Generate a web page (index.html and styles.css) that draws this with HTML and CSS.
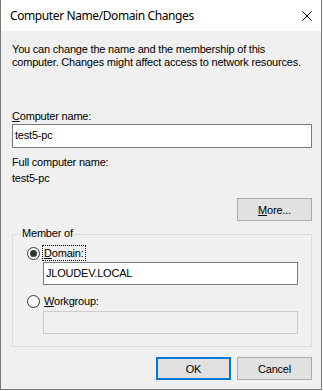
FILE: index.html
```html
<!DOCTYPE html>
<html lang="en">
<head>
    <meta charset="UTF-8">
    <title>Computer Name/Domain Changes</title>
    <link rel="stylesheet" href="styles.css">
</head>
<body>
    <div class="window">
        <div class="titlebar">
            <span class="title">Computer Name/Domain Changes</span>
            <svg class="close" width="10" height="10" viewBox="0 0 10 10">
                <path d="M0.5 0.5 L9.5 9.5 M9.5 0.5 L0.5 9.5" stroke="#000" stroke-width="1" fill="none"/>
            </svg>
        </div>
        <div class="content">
            <p class="intro">You can change the name and the membership of this computer. Changes might affect access to network resources.</p>

            <div class="label label-name"><u>C</u>omputer name:</div>
            <div class="textbox">test5-pc</div>

            <div class="label label-full">Full computer name:</div>
            <div class="label label-value">test5-pc</div>

            <div class="more-row">
                <button class="btn"><u>M</u>ore...</button>
            </div>

            <div class="group">
                <span class="group-title">Member of</span>
                <div class="radio-row">
                    <span class="radio checked"></span>
                    <span class="radio-label focused"><u>D</u>omain:</span>
                </div>
                <div class="textbox indent">JLOUDEV.LOCAL</div>
                <div class="radio-row second">
                    <span class="radio"></span>
                    <span class="radio-label"><u>W</u>orkgroup:</span>
                </div>
                <div class="textbox indent disabled"></div>
            </div>

            <div class="buttons">
                <button class="btn default">OK</button>
                <button class="btn">Cancel</button>
            </div>
        </div>
    </div>
</body>
</html>
```

FILE: styles.css
```css
* {
    margin: 0;
    padding: 0;
    box-sizing: border-box;
}

body {
    background: #ffffff;
    font-family: "Liberation Sans", Arial, sans-serif;
    font-size: 11px;
    line-height: 13px;
    color: #000;
}

.window {
    width: 322px;
    height: 390px;
    background: #f0f0f0;
    border: 1px solid #777777;
    border-top: none;
    display: flex;
    flex-direction: column;
}

.titlebar {
    height: 31px;
    background: #ffffff;
    display: flex;
    align-items: center;
    justify-content: space-between;
    padding: 0 9px 0 9px;
}

.title {
    font-family: "Noto Sans", sans-serif;
    font-size: 12px;
    line-height: 16px;
    letter-spacing: -0.4px;
}

.close {
    display: block;
}

.content {
    padding: 0 9px 0 11px;
    letter-spacing: -0.2px;
}

.intro {
    margin-top: 12px;
}

.label-name {
    margin-top: 41px;
}

.textbox {
    margin-top: 1px;
    height: 24px;
    background: #ffffff;
    border: 1px solid #7a7a7a;
    padding: 0 2px;
    line-height: 20px;
}

.label-full {
    margin-top: 8px;
}

.label-value {
    margin-top: 3px;
}

.more-row {
    display: flex;
    justify-content: flex-end;
    margin-top: 13px;
}

.btn {
    width: 75px;
    height: 23px;
    background: #e1e1e1;
    border: 1px solid #adadad;
    font-family: "Liberation Sans", Arial, sans-serif;
    font-size: 11px;
    letter-spacing: -0.2px;
    color: #000;
}

.btn.default {
    border: 2px solid #0078d7;
}

.group {
    position: relative;
    margin-top: 13px;
    border: 1px solid #dcdcdc;
    padding: 10px 14px 12px 14px;
}

.group-title {
    position: absolute;
    top: -8px;
    left: 8px;
    background: #f0f0f0;
    padding: 0 1px;
}

.radio-row {
    display: flex;
    align-items: center;
    height: 16px;
}

.radio-row.second {
    margin-top: 8px;
}

.radio {
    width: 13px;
    height: 13px;
    border: 1px solid #333333;
    border-radius: 50%;
    background: #ffffff;
    display: flex;
    align-items: center;
    justify-content: center;
}

.radio.checked::after {
    content: "";
    width: 7px;
    height: 7px;
    border-radius: 50%;
    background: #333333;
}

.radio-label {
    margin-left: 3px;
    padding: 0 1px;
    line-height: 14px;
}

.radio-label.focused {
    outline: 1px dotted #000;
}

.textbox.indent {
    margin-left: 16px;
    width: 255px;
    height: 23px;
    line-height: 20px;
}

.radio-row + .textbox.indent {
    margin-top: 1px;
}

.radio-row.second + .textbox.indent {
    margin-top: 2px;
}

.textbox.disabled {
    background: #f0f0f0;
    border-color: #cccccc;
}

.buttons {
    display: flex;
    justify-content: flex-end;
    gap: 6px;
    margin-top: 10px;
}
```
